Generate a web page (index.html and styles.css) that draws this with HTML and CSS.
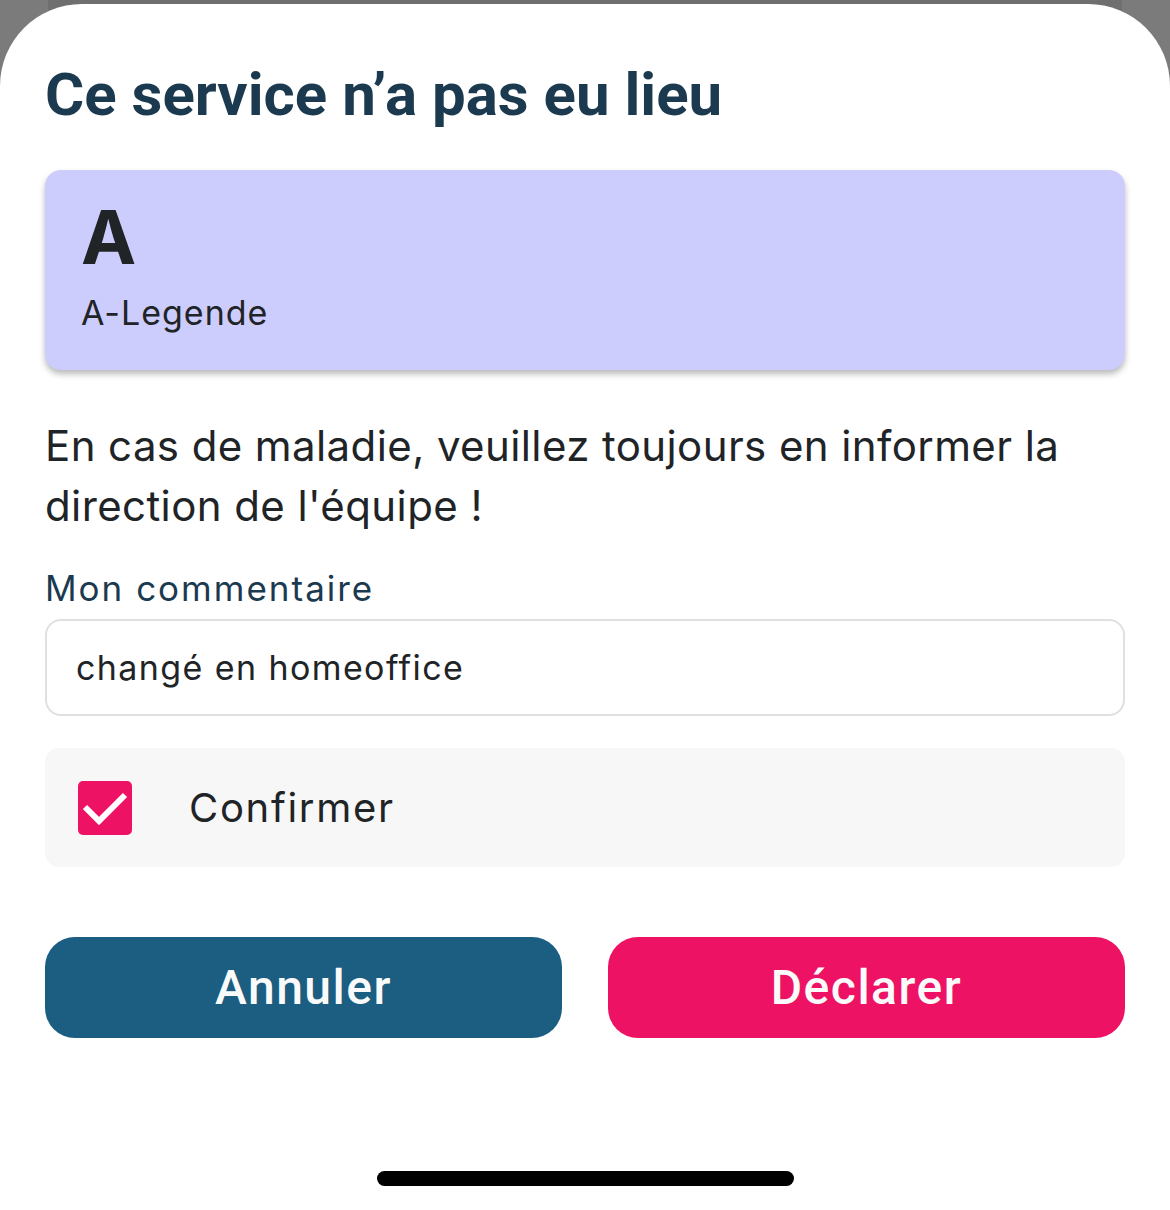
FILE: index.html
```html
<!DOCTYPE html>
<html lang="fr">
<head>
<meta charset="utf-8">
<title>Ce service n’a pas eu lieu</title>
<link rel="stylesheet" href="styles.css">
</head>
<body>
<div class="behind"></div>
<div class="sheet">
  <h1 class="title">Ce service n’a pas eu lieu</h1>
  <div class="card">
    <div class="card-letter">A</div>
    <div class="card-name">A-Legende</div>
  </div>
  <p class="notice">En cas de maladie, veuillez toujours en informer la direction de l'équipe !</p>
  <label class="field-label">Mon commentaire</label>
  <div class="input">changé en homeoffice</div>
  <div class="confirm">
    <span class="checkbox">
      <svg viewBox="0 0 54 54" width="54" height="54"><path d="M7 26 L21 40 L47 14" fill="none" stroke="#fff" stroke-width="6"/></svg>
    </span>
    <span class="confirm-label">Confirmer</span>
  </div>
  <div class="actions">
    <button class="btn btn-cancel">Annuler</button>
    <button class="btn btn-declare">Déclarer</button>
  </div>
  <div class="home-indicator"></div>
</div>
</body>
</html>
```
FILE: styles.css
```css
html, body {
  margin: 0;
  padding: 0;
}
body {
  width: 1170px;
  height: 1210px;
  background: #7b7b7b;
  position: relative;
  overflow: hidden;
  font-family: Inter, "Noto Sans", sans-serif;
}
.behind {
  position: absolute;
  left: 48px;
  right: 48px;
  top: 0;
  height: 60px;
  background: #6f6f6f;
}
.sheet {
  position: relative;
  margin-top: 4px;
  height: 1206px;
  box-sizing: border-box;
  background: #fff;
  border-radius: 82px 82px 0 0;
  padding: 56px 45px 0;
  display: flex;
  flex-direction: column;
}
.title {
  margin: 0 0 40px 0;
  font-family: Roboto, sans-serif;
  font-weight: 700;
  font-size: 60px;
  line-height: 70px;
  color: #1c3a4f;
}
.card {
  background: #cdcdfd;
  border-radius: 16px;
  box-shadow: 0 4px 6px rgba(0, 0, 0, 0.28);
  padding: 30px 37px 37px 36px;
  color: #212427;
}
.card-letter {
  font-weight: 700;
  font-size: 74px;
  line-height: 74px;
}
.card-name {
  margin-top: 19px;
  font-size: 34px;
  line-height: 40px;
  letter-spacing: 1px;
}
.notice {
  margin: 46px 0 0 0;
  font-size: 42px;
  line-height: 60px;
  letter-spacing: 0.4px;
  color: #212427;
}
.field-label {
  display: block;
  margin: 30px 0 0 0;
  font-size: 35px;
  line-height: 44px;
  letter-spacing: 2px;
  color: #1c3a4f;
}
.input {
  margin-top: 9px;
  height: 97px;
  box-sizing: border-box;
  border: 2px solid #e0e0e0;
  border-radius: 16px;
  padding-left: 29px;
  display: flex;
  align-items: center;
  font-size: 34px;
  letter-spacing: 1.4px;
  color: #212427;
}
.confirm {
  margin-top: 32px;
  height: 119px;
  background: #f7f7f7;
  border-radius: 14px;
  display: flex;
  align-items: center;
  padding-left: 33px;
  gap: 57px;
}
.checkbox {
  width: 54px;
  height: 54px;
  border-radius: 5px;
  background: #ee1264;
  display: flex;
}
.confirm-label {
  font-size: 40px;
  letter-spacing: 1.7px;
  color: #212427;
}
.actions {
  margin-top: 70px;
  display: flex;
  gap: 46px;
}
.btn {
  flex: 1;
  height: 101px;
  border: none;
  border-radius: 30px;
  font-family: Roboto, sans-serif;
  font-weight: 500;
  font-size: 48px;
  letter-spacing: 1.5px;
  color: #fafafa;
  padding: 0;
}
.btn-cancel {
  background: #1b5e82;
}
.btn-declare {
  background: #ee1264;
}
.home-indicator {
  margin: auto auto 24px;
  width: 417px;
  height: 15px;
  border-radius: 8px;
  background: #000;
}
```
